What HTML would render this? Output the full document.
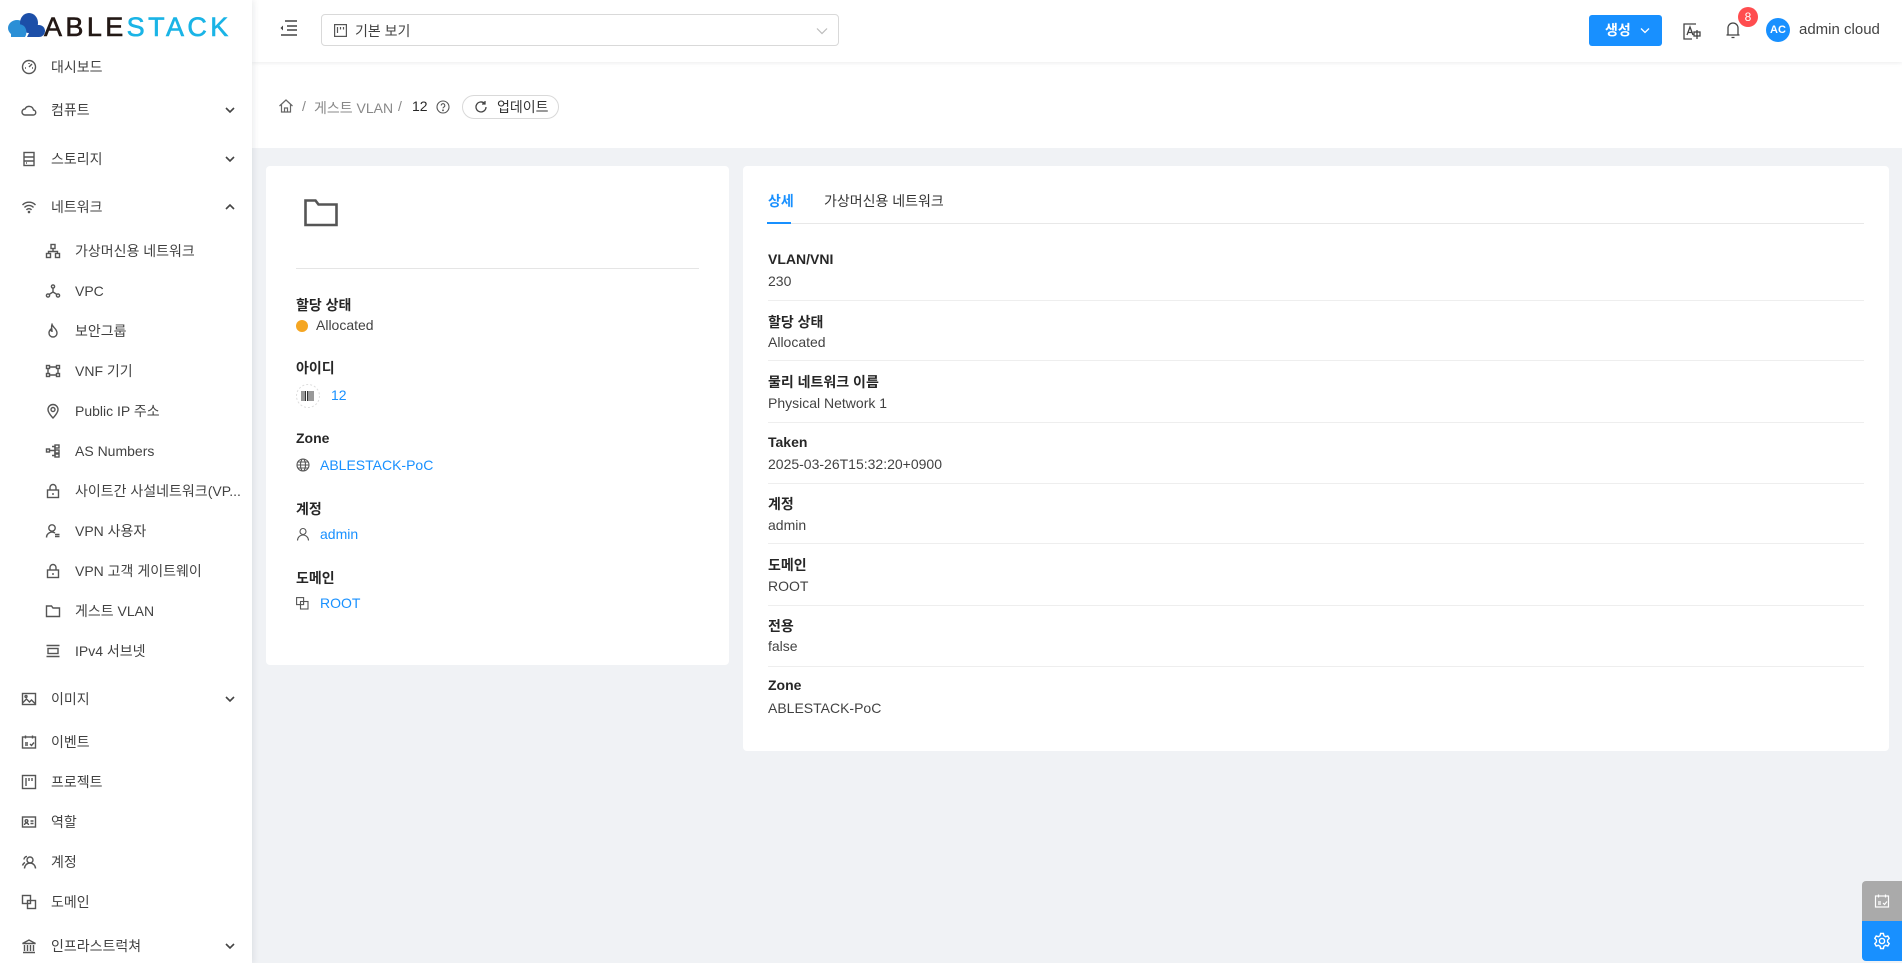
<!DOCTYPE html>
<html><head><meta charset="utf-8"><style>
*{box-sizing:border-box;margin:0;padding:0}
body{width:1902px;height:963px;overflow:hidden;background:#f0f2f5;font-family:"Liberation Sans","Noto Sans CJK KR",sans-serif;color:rgba(0,0,0,.85);font-size:14px;position:relative}
.abs{position:absolute}
#side{position:absolute;left:0;top:0;width:252px;height:963px;background:#fff;box-shadow:2px 0 6px rgba(0,21,41,.08);z-index:3}
.mi{position:absolute;left:0;width:252px;height:20px;line-height:20px;font-size:14px;color:rgba(0,0,0,.75)}
.mi svg{position:absolute;top:2px;width:16px;height:16px;fill:none;stroke:#555;stroke-width:1.4}
.mi .t{position:absolute}
.mi svg.ch{left:225px;top:6px;width:10px;height:8px;stroke:#444;stroke-width:1.6}
#head{position:absolute;left:252px;top:0;right:0;height:62px;background:#fff;box-shadow:0 1px 4px rgba(0,21,41,.08);z-index:2}
#bc{position:absolute;left:252px;top:62px;right:0;height:86px;background:#fff}
.card{position:absolute;background:#fff;border-radius:4px}
.lb{position:absolute;font-weight:bold;font-size:14px;color:rgba(0,0,0,.85)}
.vl{position:absolute;font-size:14px;color:rgba(0,0,0,.75)}
.lk{color:#1890ff}
.sep{position:absolute;left:768px;width:1096px;height:1px;background:#eee}
</style></head><body>
<div id="side">
 <svg width="38" height="26" viewBox="0 0 38 26" style="position:absolute;left:7px;top:12px"><ellipse cx="10" cy="16" rx="9" ry="8" fill="#2b8fd6"/><ellipse cx="22" cy="11" rx="9" ry="10" fill="#1c4fa8"/><path d="M20 25h12a6 6 0 000-12h-6z" fill="#1c4fa8"/><path d="M4 25h14c2-3 2-8-1-11-4-3-10-2-13 2z" fill="#2b8fd6"/></svg>
 <span style="position:absolute;left:44px;top:12px;font-size:27px;line-height:30px;letter-spacing:3.4px;color:#231815;font-family:'Liberation Sans',sans-serif;-webkit-text-stroke:0.6px #231815">ABLE<span style="color:#1ab4e6;-webkit-text-stroke:0.6px #1ab4e6">STACK</span></span>
 <div class="mi" style="top:57px"><svg style="left:21px" viewBox="0 0 16 16"><circle cx="8" cy="8" r="6.5"/><path d="M8 8l3-3M4 9h1M11 9h1M8 4v1"/></svg><span class="t" style="left:51px">대시보드</span></div>
 <div class="mi" style="top:100px"><svg style="left:21px" viewBox="0 0 16 16"><path d="M4 13a3 3 0 010-6 4.5 4.5 0 018.5 1A2.5 2.5 0 0112 13z"/></svg><span class="t" style="left:51px">컴퓨트</span><svg class="ch" viewBox="0 0 10 8"><path d="M1 2l4 4 4-4"/></svg></div>
 <div class="mi" style="top:149px"><svg style="left:21px" viewBox="0 0 16 16"><rect x="3" y="1.5" width="10" height="13"/><path d="M3 6h10M3 10h10M5 12h1"/></svg><span class="t" style="left:51px">스토리지</span><svg class="ch" viewBox="0 0 10 8"><path d="M1 2l4 4 4-4"/></svg></div>
 <div class="mi" style="top:197px"><svg style="left:21px" viewBox="0 0 16 16"><path d="M1.5 6a9 9 0 0113 0M3.5 8.5a6 6 0 019 0M5.5 11a3 3 0 015 0"/><circle cx="8" cy="13" r=".6"/></svg><span class="t" style="left:51px">네트워크</span><svg class="ch" viewBox="0 0 10 8"><path d="M1 6l4-4 4 4"/></svg></div>
 <div class="mi" style="top:241px"><svg style="left:45px" viewBox="0 0 16 16"><rect x="6" y="1.5" width="4" height="4"/><rect x="1.5" y="10.5" width="4" height="4"/><rect x="10.5" y="10.5" width="4" height="4"/><path d="M8 5.5v3M3.5 10.5V8.5h9v2"/></svg><span class="t" style="left:75px">가상머신용 네트워크</span></div>
 <div class="mi" style="top:281px"><svg style="left:45px" viewBox="0 0 16 16"><circle cx="8" cy="3.5" r="1.6"/><circle cx="3" cy="12.5" r="1.6"/><circle cx="13" cy="12.5" r="1.6"/><path d="M8 5v4l-4 2.5M8 9l4 2.5"/></svg><span class="t" style="left:75px">VPC</span></div>
 <div class="mi" style="top:321px"><svg style="left:45px" viewBox="0 0 16 16"><path d="M7 1.5c1 3 5 4.5 5 8.5a4 4 0 01-8 0c0-2 1-3 1.5-3.5.3 1.2 1 1.8 1.5 1.8C7 6 6 4 7 1.5z"/></svg><span class="t" style="left:75px">보안그룹</span></div>
 <div class="mi" style="top:361px"><svg style="left:45px" viewBox="0 0 16 16"><rect x="1.5" y="2.5" width="3" height="3"/><rect x="11.5" y="2.5" width="3" height="3"/><rect x="1.5" y="10.5" width="3" height="3"/><rect x="11.5" y="10.5" width="3" height="3"/><path d="M4.5 4h7M4.5 12h7M3 5.5v5M13 5.5v5"/></svg><span class="t" style="left:75px">VNF 기기</span></div>
 <div class="mi" style="top:401px"><svg style="left:45px" viewBox="0 0 16 16"><path d="M8 15s5-5 5-8.5a5 5 0 00-10 0C3 10 8 15 8 15z"/><circle cx="8" cy="6.5" r="2"/></svg><span class="t" style="left:75px">Public IP 주소</span></div>
 <div class="mi" style="top:441px"><svg style="left:45px" viewBox="0 0 16 16"><rect x="1.5" y="6" width="3" height="3"/><rect x="10" y="2" width="4" height="3"/><rect x="10" y="7" width="4" height="3"/><rect x="10" y="11" width="4" height="3"/><path d="M4.5 7.5h5.5M7 3.5h3v9H7"/></svg><span class="t" style="left:75px">AS Numbers</span></div>
 <div class="mi" style="top:481px"><svg style="left:45px" viewBox="0 0 16 16"><rect x="2.5" y="7" width="11" height="7.5"/><path d="M5 7V4.5a3 3 0 016 0V7M8 10v2"/></svg><span class="t" style="left:75px">사이트간 사설네트워크(VP...</span></div>
 <div class="mi" style="top:521px"><svg style="left:45px" viewBox="0 0 16 16"><circle cx="7" cy="5" r="3.2"/><path d="M1.5 14.5a5.5 5.5 0 018.5-4.5M10 11.5h4.5M10 13.5h4.5"/></svg><span class="t" style="left:75px">VPN 사용자</span></div>
 <div class="mi" style="top:561px"><svg style="left:45px" viewBox="0 0 16 16"><rect x="2.5" y="7" width="11" height="7.5"/><path d="M5 7V4.5a3 3 0 016 0V7M8 10v2"/></svg><span class="t" style="left:75px">VPN 고객 게이트웨이</span></div>
 <div class="mi" style="top:601px"><svg style="left:45px" viewBox="0 0 16 16"><path d="M1.5 3h5l1.5 2h6.5v8.5h-13z"/></svg><span class="t" style="left:75px">게스트 VLAN</span></div>
 <div class="mi" style="top:641px"><svg style="left:45px" viewBox="0 0 16 16"><path d="M1.5 2.5h13M1.5 13.5h13"/><rect x="3" y="5.5" width="10" height="5"/></svg><span class="t" style="left:75px">IPv4 서브넷</span></div>
 <div class="mi" style="top:689px"><svg style="left:21px" viewBox="0 0 16 16"><rect x="1.5" y="2.5" width="13" height="11"/><circle cx="5" cy="5.5" r="1"/><path d="M1.5 12l4-4 3 3 2-2 4 4"/></svg><span class="t" style="left:51px">이미지</span><svg class="ch" viewBox="0 0 10 8"><path d="M1 2l4 4 4-4"/></svg></div>
 <div class="mi" style="top:732px"><svg style="left:21px" viewBox="0 0 16 16"><rect x="1.5" y="3" width="13" height="11"/><path d="M4.5 1.5v3M11.5 1.5v3M4 9h3M4 11h3M9 10l1.5 1.5 2.5-3"/></svg><span class="t" style="left:51px">이벤트</span></div>
 <div class="mi" style="top:772px"><svg style="left:21px" viewBox="0 0 16 16"><rect x="1.5" y="1.5" width="13" height="13"/><path d="M5 4v8M8 4v3M11 4v3"/></svg><span class="t" style="left:51px">프로젝트</span></div>
 <div class="mi" style="top:812px"><svg style="left:21px" viewBox="0 0 16 16"><rect x="1.5" y="3" width="13" height="10"/><circle cx="5.5" cy="7" r="1.3"/><path d="M3.5 11a2 2 0 014 0M9.5 7h3M9.5 9.5h3"/></svg><span class="t" style="left:51px">역할</span></div>
 <div class="mi" style="top:852px"><svg style="left:21px" viewBox="0 0 16 16"><circle cx="9" cy="6" r="3"/><path d="M3.5 14.5a5.5 5.5 0 0111 0M6 2.5A3 3 0 003 5.5M1.5 11.5a5 5 0 012.5-3"/></svg><span class="t" style="left:51px">계정</span></div>
 <div class="mi" style="top:892px"><svg style="left:21px" viewBox="0 0 16 16"><rect x="1.5" y="1.5" width="8" height="8"/><rect x="6.5" y="6.5" width="8" height="8"/></svg><span class="t" style="left:51px">도메인</span></div>
 <div class="mi" style="top:936px"><svg style="left:21px" viewBox="0 0 16 16"><path d="M1.5 5.5L8 2l6.5 3.5zM2 14.5h12M3.5 7v6M6.5 7v6M9.5 7v6M12.5 7v6"/></svg><span class="t" style="left:51px">인프라스트럭쳐</span><svg class="ch" viewBox="0 0 10 8"><path d="M1 2l4 4 4-4"/></svg></div>
</div>

<div id="head">
 <svg class="abs" style="left:26px;top:19px" width="20" height="18" viewBox="0 0 20 18" fill="none" stroke="#444" stroke-width="1.6"><path d="M7 2h12M9 7h10M9 11h10M3 16h16"/><path d="M5 6.5L2.5 9 5 11.5z" fill="#444" stroke="none"/></svg>
 <div class="abs" style="left:69px;top:14px;width:518px;height:32px;border:1px solid #d9d9d9;border-radius:4px">
  <svg class="abs" style="left:12px;top:9px" width="13" height="13" viewBox="0 0 13 13" fill="none" stroke="#555" stroke-width="1.2"><rect x=".6" y=".6" width="11.8" height="11.8"/><path d="M3.5 3v6M6.5 3v2.5M9.5 3v2.5"/></svg>
  <span class="abs" style="left:33px;top:6px;font-size:14px;color:rgba(0,0,0,.75)">기본 보기</span>
  <svg class="abs" style="right:10px;top:12px" width="12" height="8" viewBox="0 0 12 8" fill="none" stroke="#bbb" stroke-width="1.2"><path d="M1 1.5l5 5 5-5"/></svg>
 </div>
 <div class="abs" style="left:1337px;top:15px;width:73px;height:31px;background:#1890ff;border-radius:3px;color:#fff;font-size:14px;line-height:31px;padding-left:16px;font-weight:bold">생성</div>
 <svg class="abs" style="left:1388px;top:27px" width="10" height="7" viewBox="0 0 10 7" fill="none" stroke="#fff" stroke-width="1.3"><path d="M1 1.5l4 4 4-4"/></svg>
 <svg class="abs" style="left:1430px;top:21px" width="20" height="20" viewBox="0 0 20 20" fill="none" stroke="#444" stroke-width="1.3"><path d="M14 3H2v15h8"/><path d="M5 14l3-8 3 8M6 11.5h4"/><rect x="12" y="11" width="6" height="4"/><path d="M15 9v9"/></svg>
 <svg class="abs" style="left:1473px;top:20px" width="16" height="20" viewBox="0 0 16 20" fill="none" stroke="#444" stroke-width="1.3"><path d="M3 15V8a5 5 0 0110 0v7zM1.5 15h13M6.5 17.5h3"/></svg>
 <div class="abs" style="left:1486px;top:7px;width:20px;height:20px;border-radius:10px;background:#ff4d4f;color:#fff;font-size:12px;text-align:center;line-height:20px">8</div>
 <div class="abs" style="left:1514px;top:18px;width:24px;height:24px;border-radius:12px;background:#1890ff;color:#fff;font-size:11px;font-weight:bold;text-align:center;line-height:24px">AC</div>
 <span class="abs" style="left:1547px;top:21px;font-size:15px;color:rgba(0,0,0,.75)">admin cloud</span>
</div>

<div id="bc">
 <svg class="abs" style="left:26px;top:36px" width="16" height="16" viewBox="0 0 16 16" fill="none" stroke="#666" stroke-width="1.2"><path d="M1.5 8L8 2l6.5 6M3.5 6.5V14h9V6.5M6.5 14v-4h3v4"/></svg>
 <span class="abs" style="left:50px;top:36px;font-size:14px;color:#888">/</span>
 <span class="abs" style="left:62px;top:36px;font-size:14px;color:#888">게스트 VLAN</span>
 <span class="abs" style="left:146px;top:36px;font-size:14px;color:#888">/</span>
 <span class="abs" style="left:160px;top:36px;font-size:14px;color:rgba(0,0,0,.85)">12</span>
 <svg class="abs" style="left:184px;top:38px" width="14" height="14" viewBox="0 0 14 14" fill="none" stroke="#555" stroke-width="1.1"><circle cx="7" cy="7" r="6"/><path d="M5.2 5.5a1.8 1.8 0 113 1.3c-.9.5-1.2.9-1.2 1.6"/><circle cx="7" cy="10.3" r=".4" fill="#555"/></svg>
 <div class="abs" style="left:210px;top:33px;width:97px;height:24px;border:1px solid #d9d9d9;border-radius:12px;font-size:14px;line-height:22px;padding-left:34px;color:rgba(0,0,0,.8)">업데이트</div>
 <svg class="abs" style="left:222px;top:38px" width="14" height="14" viewBox="0 0 14 14" fill="none" stroke="#444" stroke-width="1.3"><path d="M12 7a5 5 0 11-1.5-3.6M11 1v3H8"/></svg>
</div>

<div class="card" style="left:266px;top:166px;width:463px;height:499px"></div>
<svg class="abs" style="left:304px;top:199px" width="34" height="28" viewBox="0 0 34 28" fill="none" stroke="#555" stroke-width="2.6"><path d="M1.5 1.5h10l3 4h18v20.5h-31z"/></svg>
<div class="abs" style="left:296px;top:268px;width:403px;height:1px;background:#e5e5e5"></div>
<span class="lb" style="left:296px;top:295px">할당 상태</span>
<span class="abs" style="left:296px;top:320px;width:12px;height:12px;border-radius:6px;background:#f5a623"></span>
<span class="vl" style="left:316px;top:317px">Allocated</span>
<span class="lb" style="left:296px;top:358px">아이디</span>
<svg class="abs" style="left:296px;top:384px" width="24" height="24" viewBox="0 0 24 24"><circle cx="12" cy="12" r="11.5" fill="none" stroke="#ddd" stroke-dasharray="2 2"/><path d="M6 7v10M8 7v10M9.5 7v10M11.5 7v10M13 7v10M15 7v10M17 7v10" stroke="#333" stroke-width="1"/></svg>
<span class="vl lk" style="left:331px;top:387px">12</span>
<span class="lb" style="left:296px;top:430px">Zone</span>
<svg class="abs" style="left:296px;top:458px" width="14" height="14" viewBox="0 0 14 14" fill="none" stroke="#555" stroke-width="1.1"><circle cx="7" cy="7" r="6"/><ellipse cx="7" cy="7" rx="2.5" ry="6"/><path d="M1 7h12M2 4h10M2 10h10"/></svg>
<span class="vl lk" style="left:320px;top:457px">ABLESTACK-PoC</span>
<span class="lb" style="left:296px;top:499px">계정</span>
<svg class="abs" style="left:296px;top:527px" width="14" height="14" viewBox="0 0 14 14" fill="none" stroke="#555" stroke-width="1.1"><circle cx="7" cy="4.5" r="3"/><path d="M1.5 13.5a5.5 5.5 0 0111 0"/></svg>
<span class="vl lk" style="left:320px;top:526px">admin</span>
<span class="lb" style="left:296px;top:568px">도메인</span>
<svg class="abs" style="left:296px;top:597px" width="13" height="13" viewBox="0 0 13 13" fill="none" stroke="#555" stroke-width="1.1"><rect x=".6" y=".6" width="7" height="7"/><rect x="4.5" y="4.5" width="7.5" height="7.5"/></svg>
<span class="vl lk" style="left:320px;top:595px">ROOT</span>

<div class="card" style="left:743px;top:166px;width:1146px;height:585px"></div>
<span class="abs" style="left:768px;top:191px;font-size:14px;color:#1890ff;font-weight:bold">상세</span>
<span class="abs" style="left:824px;top:191px;font-size:14px;color:rgba(0,0,0,.8)">가상머신용 네트워크</span>
<div class="abs" style="left:768px;top:223px;width:1096px;height:1px;background:#e8e8e8"></div>
<div class="abs" style="left:767px;top:222px;width:24px;height:2px;background:#1890ff"></div>

<span class="lb" style="left:768px;top:251px">VLAN/VNI</span><span class="vl" style="left:768px;top:273px">230</span>
<div class="sep" style="top:300px"></div>
<span class="lb" style="left:768px;top:312px">할당 상태</span><span class="vl" style="left:768px;top:334px">Allocated</span>
<div class="sep" style="top:360px"></div>
<span class="lb" style="left:768px;top:372px">물리 네트워크 이름</span><span class="vl" style="left:768px;top:395px">Physical Network 1</span>
<div class="sep" style="top:422px"></div>
<span class="lb" style="left:768px;top:434px">Taken</span><span class="vl" style="left:768px;top:456px">2025-03-26T15:32:20+0900</span>
<div class="sep" style="top:483px"></div>
<span class="lb" style="left:768px;top:494px">계정</span><span class="vl" style="left:768px;top:517px">admin</span>
<div class="sep" style="top:543px"></div>
<span class="lb" style="left:768px;top:555px">도메인</span><span class="vl" style="left:768px;top:578px">ROOT</span>
<div class="sep" style="top:605px"></div>
<span class="lb" style="left:768px;top:616px">전용</span><span class="vl" style="left:768px;top:638px">false</span>
<div class="sep" style="top:666px"></div>
<span class="lb" style="left:768px;top:677px">Zone</span><span class="vl" style="left:768px;top:700px">ABLESTACK-PoC</span>

<div class="abs" style="left:1862px;top:881px;width:40px;height:40px;background:#aaa;border-radius:4px 0 0 0"></div>
<svg class="abs" style="left:1874px;top:893px" width="16" height="16" viewBox="0 0 16 16" fill="none" stroke="#fff" stroke-width="1.2"><rect x="1.5" y="3" width="13" height="11"/><path d="M4.5 1.5v3M11.5 1.5v3M4 9h3M4 11h3M9 10l1.5 1.5 2.5-3"/></svg>
<div class="abs" style="left:1862px;top:921px;width:40px;height:40px;background:#1890ff;border-radius:0 0 0 4px"></div>
<svg class="abs" style="left:1873px;top:932px" width="18" height="18" viewBox="0 0 18 18" fill="none" stroke="#fff" stroke-width="1.4"><circle cx="9" cy="9" r="2.6"/><path d="M7.6 1.5h2.8l.5 2.2 1.8 1 2.1-.7 1.4 2.4-1.6 1.6v2l1.6 1.6-1.4 2.4-2.1-.7-1.8 1-.5 2.2H7.6l-.5-2.2-1.8-1-2.1.7-1.4-2.4L3.4 10V8L1.8 6.4l1.4-2.4 2.1.7 1.8-1z"/></svg>
</body></html>
